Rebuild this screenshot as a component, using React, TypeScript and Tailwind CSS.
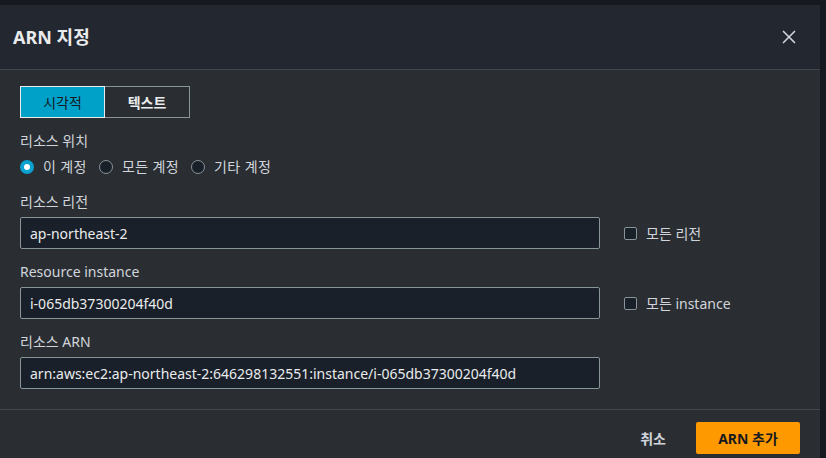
import { X } from "lucide-react";

const font = { fontFamily: '"Noto Sans", "Noto Sans CJK KR", sans-serif' };

const Field = ({
  label,
  value,
  check,
}: {
  label: string;
  value: string;
  check?: string;
}) => (
  <div className="flex flex-col">
    <div className="h-[20px] text-[14px] leading-[20px] text-[#d1d5db]">{label}</div>
    <div className="mt-[5px] flex items-center">
      <div className="flex h-[32px] w-[580px] items-center rounded-[2px] border border-[#879596] bg-[#1a2029] px-[9px] text-[14px] text-[#e9ebed]">
        {value}
      </div>
      {check && (
        <label className="ml-[24px] flex items-center gap-[9px] text-[14px] text-[#d1d5db]">
          <span className="h-[13px] w-[13px] rounded-[2px] border border-[#879596] bg-[#1a2029]" />
          {check}
        </label>
      )}
    </div>
  </div>
);

const Radio = ({ label, on }: { label: string; on?: boolean }) => (
  <div className="flex items-center gap-[9px]">
    {on ? (
      <span className="flex h-[14px] w-[14px] items-center justify-center rounded-full bg-[#0aa0d0]">
        <span className="h-[6px] w-[6px] rounded-full bg-white" />
      </span>
    ) : (
      <span className="h-[14px] w-[14px] rounded-full border border-[#879596] bg-[#1a2029]" />
    )}
    <span className="text-[14px] tracking-[0.4px] text-[#d1d5db]">{label}</span>
  </div>
);

export default function App() {
  return (
    <div className="flex h-[458px] w-[826px] overflow-hidden bg-[#16191f]" style={font}>
      <div className="mt-[5px] flex w-[820px] flex-col bg-[#2a2e33]">
        <div className="flex h-[65px] items-center justify-between border-b border-[#414750] bg-[#232730] pl-[13px] pr-[20px]">
          <h1 className="text-[18px] font-bold text-[#e9ebed]">ARN 지정</h1>
          <X className="h-[22px] w-[22px] text-[#d1d5db]" strokeWidth={1.8} />
        </div>

        <div className="flex flex-col px-[20px] pt-[16px]">
          <div className="flex h-[32px] w-[170px] text-[14px]">
            <div className="flex w-[85px] items-center justify-center border border-[#e9ebed] bg-[#00a1c9] text-[#16191f]">
              시각적
            </div>
            <div className="flex w-[85px] items-center justify-center border border-l-0 border-[#879596] font-bold text-[#e9ebed]">
              텍스트
            </div>
          </div>

          <div className="mt-[13px] h-[20px] text-[14px] leading-[20px] text-[#d1d5db]">리소스 위치</div>
          <div className="mt-[5px] flex items-center gap-[12px]">
            <Radio label="이 계정" on />
            <Radio label="모든 계정" />
            <Radio label="기타 계정" />
          </div>

          <div className="mt-[15px] flex flex-col gap-[13px]">
            <Field label="리소스 리전" value="ap-northeast-2" check="모든 리전" />
            <Field label="Resource instance" value="i-065db37300204f40d" check="모든 instance" />
            <Field
              label="리소스 ARN"
              value="arn:aws:ec2:ap-northeast-2:646298132551:instance/i-065db37300204f40d"
            />
          </div>
        </div>

        <div className="mt-auto flex h-[49px] shrink-0 items-start justify-end gap-[30px] border-t border-[#414750] pr-[20px] pt-[12px]">
          <button className="h-[32px] text-[14px] font-bold text-[#d1d5db]">취소</button>
          <button className="h-[32px] w-[104px] rounded-[2px] bg-[#ff9900] text-[14px] font-bold text-[#16191f]">
            ARN 추가
          </button>
        </div>
      </div>
    </div>
  );
}
